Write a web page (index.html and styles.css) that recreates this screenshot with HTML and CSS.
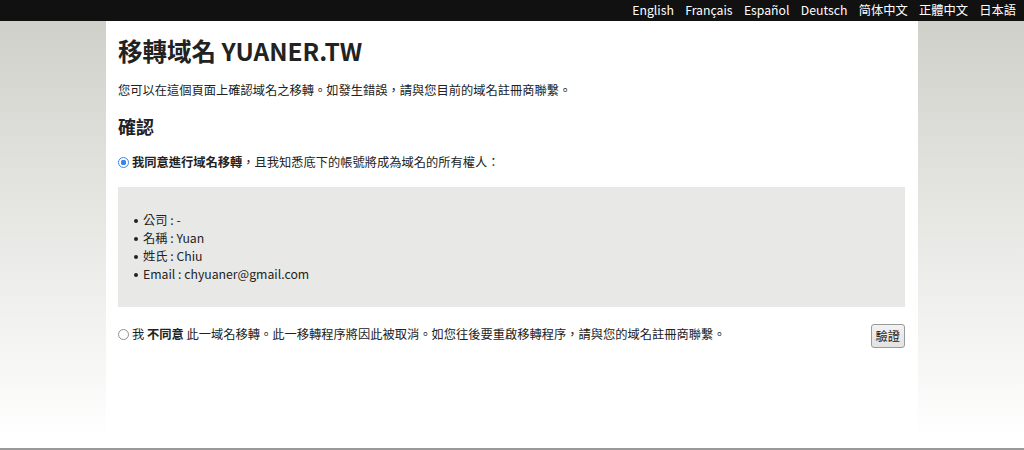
FILE: index.html
```html
<!DOCTYPE html>
<html lang="zh-TW">
<head>
<meta charset="utf-8">
<title>移轉域名 YUANER.TW</title>
<link rel="stylesheet" href="styles.css">
</head>
<body>
<div class="topbar">
  <nav class="langs">
    <a href="#">English</a>
    <a href="#">Français</a>
    <a href="#">Español</a>
    <a href="#">Deutsch</a>
    <a href="#">简体中文</a>
    <a href="#">正體中文</a>
    <a href="#">日本語</a>
  </nav>
</div>
<main class="page">
  <h1 class="title">移轉域名 YUANER.TW</h1>
  <p class="intro">您可以在這個頁面上確認域名之移轉。如發生錯誤，請與您目前的域名註冊商聯繫。</p>
  <h2 class="section">確認</h2>
  <label class="choice">
    <span class="radio checked"></span>
    <span><b>我同意進行域名移轉</b>，且我知悉底下的帳號將成為域名的所有權人：</span>
  </label>
  <div class="owner">
    <ul>
      <li>公司 : -</li>
      <li>名稱 : Yuan</li>
      <li>姓氏 : Chiu</li>
      <li>Email : chyuaner@gmail.com</li>
    </ul>
  </div>
  <div class="row">
    <label class="choice">
      <span class="radio"></span>
      <span>我 <b>不同意</b> 此一域名移轉。此一移轉程序將因此被取消。如您往後要重啟移轉程序，請與您的域名註冊商聯繫。</span>
    </label>
    <button class="btn" type="button">驗證</button>
  </div>
</main>
</body>
</html>
```
FILE: styles.css
```css
html, body {
  margin: 0;
  padding: 0;
  height: 100%;
}
body {
  font-family: "Noto Sans CJK TC", "Noto Sans", sans-serif;
  font-size: 12.25px;
  color: #222;
  background: linear-gradient(to bottom, #cecec8 0px, #ffffff 440px);
  border-bottom: 2px solid #999;
  box-sizing: border-box;
  display: flex;
  flex-direction: column;
  overflow: hidden;
}
.topbar {
  background: #111;
  height: 21px;
  display: flex;
  justify-content: flex-end;
  align-items: center;
  padding-right: 8px;
  flex: none;
}
.langs {
  display: flex;
  gap: 11.3px;
}
.langs a {
  color: #fff;
  text-decoration: none;
  font-size: 12.25px;
  line-height: 21px;
}
.page {
  width: 812px;
  margin: 0 auto;
  background: #fff;
  padding: 12px 13px 0 12px;
  box-sizing: border-box;
  flex: 1;
}
.title {
  font-size: 24.5px;
  font-weight: bold;
  margin: 0;
  line-height: 36px;
}
.intro {
  font-size: 12.25px;
  margin: 12px 0 0;
  line-height: 18px;
}
.section {
  font-size: 18px;
  font-weight: bold;
  margin: 14px 0 0;
  line-height: 26px;
}
.choice {
  display: flex;
  align-items: center;
  font-size: 12.25px;
  line-height: 18px;
  gap: 3px;
}
.page > .choice {
  margin-top: 14px;
}
.radio {
  width: 9px;
  height: 9px;
  border: 1.5px solid #8f8f9d;
  border-radius: 50%;
  flex: none;
  background: #fff;
}
.radio.checked {
  border-color: #3d85e0;
  background: radial-gradient(circle, #3d85e0 0 2.6px, #fff 3px);
}
.owner {
  background: #e8e8e6;
  margin-top: 16px;
  padding: 24px 15px;
  font-size: 12.25px;
  line-height: 18px;
}
.owner ul {
  margin: 0;
  padding-left: 10px;
  list-style: none;
}
.owner li {
  position: relative;
}
.owner li::before {
  content: "";
  position: absolute;
  left: -9px;
  top: 8px;
  width: 4px;
  height: 4px;
  border-radius: 50%;
  background: #222;
}
.row {
  display: flex;
  justify-content: space-between;
  align-items: flex-start;
  margin-top: 18px;
}
.btn {
  font-family: inherit;
  font-size: 12.25px;
  line-height: 16px;
  padding: 3px 4px;
  border: 1px solid #9a9a9a;
  border-radius: 3px;
  background: linear-gradient(#f2f2f2, #e2e2e2);
  color: #222;
  margin-top: -1px;
}
```
